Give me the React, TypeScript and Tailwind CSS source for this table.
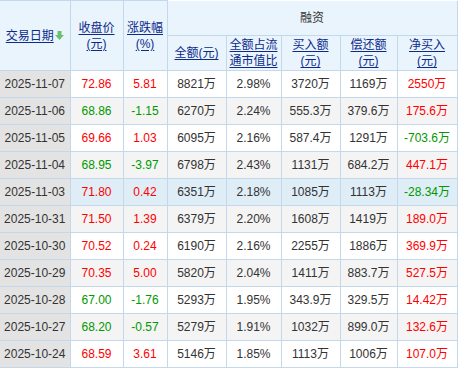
const ROWS = [
  { date: "2025-11-07", close: "72.86", chg: "5.81", amt: "8821万", ratio: "2.98%", buy: "3720万", repay: "1169万", net: "2550万" },
  { date: "2025-11-06", close: "68.86", chg: "-1.15", amt: "6270万", ratio: "2.24%", buy: "555.3万", repay: "379.6万", net: "175.6万" },
  { date: "2025-11-05", close: "69.66", chg: "1.03", amt: "6095万", ratio: "2.16%", buy: "587.4万", repay: "1291万", net: "-703.6万" },
  { date: "2025-11-04", close: "68.95", chg: "-3.97", amt: "6798万", ratio: "2.43%", buy: "1131万", repay: "684.2万", net: "447.1万" },
  { date: "2025-11-03", close: "71.80", chg: "0.42", amt: "6351万", ratio: "2.18%", buy: "1085万", repay: "1113万", net: "-28.34万" },
  { date: "2025-10-31", close: "71.50", chg: "1.39", amt: "6379万", ratio: "2.20%", buy: "1608万", repay: "1419万", net: "189.0万" },
  { date: "2025-10-30", close: "70.52", chg: "0.24", amt: "6190万", ratio: "2.16%", buy: "2255万", repay: "1886万", net: "369.9万" },
  { date: "2025-10-29", close: "70.35", chg: "5.00", amt: "5820万", ratio: "2.04%", buy: "1411万", repay: "883.7万", net: "527.5万" },
  { date: "2025-10-28", close: "67.00", chg: "-1.76", amt: "5293万", ratio: "1.95%", buy: "343.9万", repay: "329.5万", net: "14.42万" },
  { date: "2025-10-27", close: "68.20", chg: "-0.57", amt: "5279万", ratio: "1.91%", buy: "1032万", repay: "899.0万", net: "132.6万" },
  { date: "2025-10-24", close: "68.59", chg: "3.61", amt: "5146万", ratio: "1.85%", buy: "1113万", repay: "1006万", net: "107.0万" },
];

const tone = (v: string) => (v.startsWith("-") ? "text-[#009900]" : "text-[#ff0000]");

function HeadLink({ children }: { children: React.ReactNode }) {
  return <span className="text-[#0b2a8a] underline underline-offset-2">{children}</span>;
}

export default function App() {
  const th = "border border-[#c3d8ea] font-normal p-0 text-center align-middle";
  const td = "border border-[#c3d8ea] p-0 text-center h-[27px]";
  return (
    <div className="w-[458px] h-[368px] bg-white overflow-hidden">
      <table
        className="border-collapse table-fixed w-[457px] text-[12px] leading-[16px] text-[#333]"
        style={{ fontFamily: '"Liberation Sans", Arial, "Noto Sans CJK SC", sans-serif' }}
      >
        <colgroup>
          <col className="w-[70px]" />
          <col className="w-[53px]" />
          <col className="w-[44px]" />
          <col className="w-[59px]" />
          <col className="w-[55px]" />
          <col className="w-[59px]" />
          <col className="w-[57px]" />
          <col className="w-[60px]" />
        </colgroup>
        <thead className="bg-[#eaf4fd]">
          <tr className="h-[35px]">
            <th rowSpan={2} className={`${th} border-l-0`}>
              <span className="inline-flex items-center">
                <HeadLink>交易日期</HeadLink>
                <svg width="9" height="9" viewBox="0 0 9 9" className="ml-px">
                  <rect x="2.5" y="0" width="4" height="4" fill="#6cc06c" />
                  <path d="M0 4 H9 L4.5 9 Z" fill="#6cc06c" />
                </svg>
              </span>
            </th>
            <th rowSpan={2} className={th}>
              <HeadLink>收盘价</HeadLink>
              <br />
              <HeadLink>(元)</HeadLink>
            </th>
            <th rowSpan={2} className={th}>
              <HeadLink>涨跌幅</HeadLink>
              <br />
              <HeadLink>(%)</HeadLink>
            </th>
            <th colSpan={5} className={`${th} border-t-0`}>融资</th>
          </tr>
          <tr className="h-[35px]">
            <th className={th}>
              <HeadLink>全额(元)</HeadLink>
            </th>
            <th className={th}>
              <HeadLink>全额占流</HeadLink>
              <br />
              <HeadLink>通市值比</HeadLink>
            </th>
            <th className={th}>
              <HeadLink>买入额</HeadLink>
              <br />
              <HeadLink>(元)</HeadLink>
            </th>
            <th className={th}>
              <HeadLink>偿还额</HeadLink>
              <br />
              <HeadLink>(元)</HeadLink>
            </th>
            <th className={th}>
              <HeadLink>净买入</HeadLink>
              <br />
              <HeadLink>(元)</HeadLink>
            </th>
          </tr>
        </thead>
        <tbody>
          {ROWS.map((r, i) => (
            <tr
              key={r.date}
              className={i === 4 ? "bg-[#deedf6]" : i % 2 === 1 ? "bg-[#f4f4f4]" : "bg-white"}
            >
              <td className={`${td} border-l-0 bg-[#e3e3e3]`}>{r.date}</td>
              <td className={`${td} ${tone(r.chg)}`}>{r.close}</td>
              <td className={`${td} ${tone(r.chg)}`}>{r.chg}</td>
              <td className={td}>{r.amt}</td>
              <td className={td}>{r.ratio}</td>
              <td className={td}>{r.buy}</td>
              <td className={td}>{r.repay}</td>
              <td className={`${td} ${tone(r.net)}`}>{r.net}</td>
            </tr>
          ))}
        </tbody>
      </table>
    </div>
  );
}
